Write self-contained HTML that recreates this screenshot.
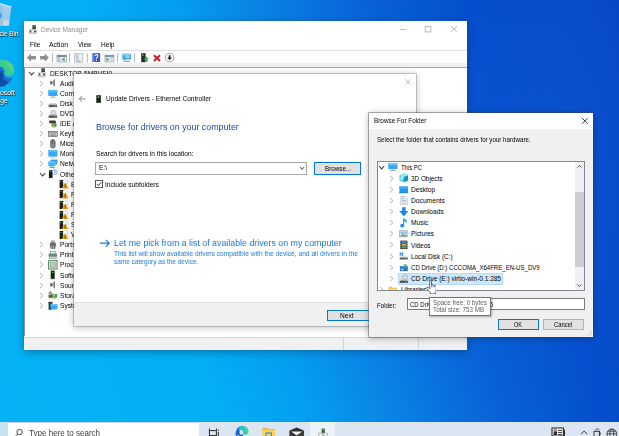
<!DOCTYPE html>
<html><head><meta charset="utf-8"><title>Device Manager</title>
<style>
*{box-sizing:border-box;margin:0;padding:0}
html,body{width:619px;height:436px;overflow:hidden}
body{font-family:"Liberation Sans",sans-serif;font-size:7.2px;color:#000;position:relative;background:#0a66d0}
.L{position:absolute;left:0;top:0;width:619px;height:436px;overflow:hidden}
.L>*,.P>*{position:absolute}
.P{position:absolute}
.t{position:absolute;white-space:nowrap;transform-origin:0 50%}
#desk{background:
  radial-gradient(ellipse 120px 260px at 565px 150px, rgba(30,105,230,.25), rgba(30,105,230,0) 100%),
  linear-gradient(72deg,#05b3f5 0%,#03aef4 30%,#059df0 42%,#0a7fe4 54%,#0863d8 66%,#054ecd 80%,#0645c2 100%)}
#dm,#ud,#bf,#tip{filter:blur(.3px)}
</style></head><body>
<div class="L" id="desk"></div>

<div class="L" id="dicons">
 <svg style="left:0;top:0" width="14" height="28" viewBox="0 0 14 28"><defs><linearGradient id="rb" x1="0" y1="0" x2="0" y2="1"><stop offset="0" stop-color="#a9d1ee"/><stop offset=".7" stop-color="#9cc8e8"/><stop offset=".78" stop-color="#c9d3dc"/><stop offset="1" stop-color="#d4d9de"/></linearGradient></defs><polygon points="0,3.2 11.4,6.4 8.9,25.8 0,25.8" fill="url(#rb)"/><polygon points="0,3.2 3,4.1 3,25.8 0,25.8" fill="#8cc0e6" opacity=".75"/><polygon points="0,3.2 11.4,6.4 11.2,7.6 0,4.6" fill="#cfe6f6"/><rect x="0" y="13" width="1.4" height="5" fill="#3b9fe6"/></svg>
 <svg style="left:0;top:59px" width="16" height="29" viewBox="0 0 16 29"><defs><linearGradient id="eg" x1="0" y1="1" x2="1" y2="0"><stop offset="0" stop-color="#27b6c8"/><stop offset=".55" stop-color="#3fcf8a"/><stop offset="1" stop-color="#86e35c"/></linearGradient></defs><path d="M0 1.2 C8 0.2 14.4 5.4 14.2 12 C14 15.8 11 17.4 7.6 17.4 C4.6 17.4 3 15.6 4.2 13.6 C5.4 11.4 3 8 0 8Z" fill="url(#eg)"/><path d="M0 8 C2.4 8 4.6 10 4.6 12.4 C3.4 14.6 4.6 17.6 8 18.6 C10 19 11.6 18.8 12.6 18.2 C11.4 23.4 5 28 0 27.6Z" fill="#1a6fd0"/><path d="M0 12 C1.6 12 3.6 14 3.2 17 C3 20.4 5.4 22.6 8.6 23 C6 26.4 3 27.8 0 27.6Z" fill="#0d4ea6"/></svg>
<div class="t" id="t0" style="left:-15.5px;top:29.3px;font-size:7.2px;line-height:10.1px;color:#fff;transform:scaleX(0.8800);text-shadow:0 0 1.2px rgba(0,0,0,.9),.5px .7px 1px rgba(0,0,0,.85),0 0 .3px #fff;">Recycle Bin</div>
<div class="t" id="t1" style="left:-12.9px;top:87.7px;font-size:7.2px;line-height:10.1px;color:#fff;transform:scaleX(0.9550);text-shadow:0 0 1.2px rgba(0,0,0,.9),.5px .7px 1px rgba(0,0,0,.85),0 0 .3px #fff;">Microsoft</div>
<div class="t" id="t2" style="left:-7.9px;top:96.0px;font-size:7.2px;line-height:10.1px;color:#fff;transform:scaleX(0.9400);text-shadow:0 0 1.2px rgba(0,0,0,.9),.5px .7px 1px rgba(0,0,0,.85),0 0 .3px #fff;">Edge</div>
</div>

<!-- Device Manager window -->
<div class="L" id="dm">
 <div style="left:24.3px;top:21.3px;width:442.8px;height:328.6px;background:#fff;box-shadow:0 0 0 .5px rgba(40,100,160,.4),0 2px 8px rgba(0,0,0,.3)"></div>
 <div style="left:24.3px;top:50.1px;width:442.8px;height:.8px;background:#dedede"></div>
 <div style="left:24.3px;top:62.8px;width:442.8px;height:4.4px;background:#f0f0f0"></div>
 <div style="left:24.3px;top:67.1px;width:442.8px;height:1.4px;background:#a6a6a6"></div>
 <div style="left:24.3px;top:336.6px;width:442.8px;height:13.3px;background:#f0f0f0;border-top:.6px solid #dcdcdc"></div>
 <div style="left:343.4px;top:338px;width:.7px;height:12px;background:#d4d4d4"></div>
 <div style="left:417.6px;top:338px;width:.7px;height:12px;background:#d4d4d4"></div>
<div style="left:24.3px;top:68px;width:1.2px;height:268.2px;background:#909090"></div>
<svg style="left:37.2px;top:68.2px" width="9.7" height="9.7" viewBox="0 0 16 16"><rect x="7.3" y="0.5" width="5.6" height="6.6" fill="#2a2f2a"/><rect x="8.8" y="1.6" width="2.6" height="3.6" fill="#2e8a3a"/><rect x="1.3" y="6.9" width="13.1" height="8.3" fill="#c6c6c6"/><rect x="3.1" y="9.6" width="2.7" height="2.2" fill="#3a3a3a"/><rect x="9.9" y="9.6" width="3" height="2.2" fill="#3a3a3a"/><rect x="5.8" y="9.2" width="4.1" height="3" fill="#fff"/></svg>
<svg style="left:27.7px;top:71.2px" width="7.2" height="4.9" viewBox="-1 -1 7.2 4.9"><path d="M0 0 L2.6 2.9 L5.2 0" fill="none" stroke="#3c3c3c" stroke-width="1.05"/></svg>
<svg style="left:48.0px;top:78.3px" width="9.7" height="9.7" viewBox="0 0 16 16"><polygon points="4,5.5 7.5,5.5 11.5,1.5 11.5,14.5 7.5,10.5 4,10.5" fill="#a2a2a2"/><rect x="4" y="5.2" width="1.8" height="5.6" fill="#4a4a4a"/><polygon points="9.4,3.6 11.5,1.5 11.5,14.5 9.4,12.4" fill="#7e7e7e"/></svg>
<svg style="left:39.4px;top:79.6px" width="4.9" height="7.2" viewBox="-1 -1 4.9 7.2"><path d="M0 0 L2.9 2.6 L0 5.2" fill="none" stroke="#a9a9a9" stroke-width=".95"/></svg>
<svg style="left:48.0px;top:88.5px" width="9.7" height="9.7" viewBox="0 0 16 16"><rect x="0.5" y="1.5" width="15" height="10" fill="#35a8f5"/><rect x="0.5" y="1.5" width="15" height="3" fill="#5cc0fa"/><rect x="6" y="11.5" width="4" height="2" fill="#a8c8dc"/><rect x="3" y="13.5" width="10" height="1" fill="#9aa"/></svg>
<svg style="left:39.4px;top:89.7px" width="4.9" height="7.2" viewBox="-1 -1 4.9 7.2"><path d="M0 0 L2.9 2.6 L0 5.2" fill="none" stroke="#a9a9a9" stroke-width=".95"/></svg>
<svg style="left:48.0px;top:98.5px" width="9.7" height="9.7" viewBox="0 0 16 16"><polygon points="2.5,7 13.5,7 15,9.5 1,9.5" fill="#c2c2c2"/><rect x="1" y="9.5" width="14" height="4" fill="#5a5a5a"/><rect x="10.5" y="10.8" width="3" height="1.4" fill="#46d246"/></svg>
<svg style="left:39.4px;top:99.8px" width="4.9" height="7.2" viewBox="-1 -1 4.9 7.2"><path d="M0 0 L2.9 2.6 L0 5.2" fill="none" stroke="#a9a9a9" stroke-width=".95"/></svg>
<svg style="left:48.0px;top:108.7px" width="9.7" height="9.7" viewBox="0 0 16 16"><circle cx="9" cy="6" r="5.2" fill="#cfcfcf"/><circle cx="9" cy="6" r="1.3" fill="#f4f4f4"/><polygon points="2.5,9 13.5,9 15,11 1,11" fill="#aaa"/><rect x="1" y="11" width="14" height="3.5" fill="#4a4a4a"/><rect x="10.5" y="12" width="3" height="1.3" fill="#46d246"/></svg>
<svg style="left:39.4px;top:109.9px" width="4.9" height="7.2" viewBox="-1 -1 4.9 7.2"><path d="M0 0 L2.9 2.6 L0 5.2" fill="none" stroke="#a9a9a9" stroke-width=".95"/></svg>
<svg style="left:48.0px;top:118.8px" width="9.7" height="9.7" viewBox="0 0 16 16"><rect x="2" y="3" width="11" height="4" fill="#3a3a3a"/><rect x="3" y="2" width="9" height="1.2" fill="#888"/><rect x="6" y="7" width="8" height="5.5" fill="#2f8f3f"/><rect x="8" y="8.5" width="3" height="2.5" fill="#9ad09a"/><rect x="7" y="12.5" width="6" height="1.5" fill="#e0a020"/></svg>
<svg style="left:39.4px;top:120.0px" width="4.9" height="7.2" viewBox="-1 -1 4.9 7.2"><path d="M0 0 L2.9 2.6 L0 5.2" fill="none" stroke="#a9a9a9" stroke-width=".95"/></svg>
<svg style="left:48.0px;top:128.8px" width="9.7" height="9.7" viewBox="0 0 16 16"><rect x="0.7" y="4" width="14.6" height="8.5" fill="#c9c9c9" stroke="#5c5c5c" stroke-width="1"/><rect x="2" y="5.5" width="12" height="1.2" fill="#888"/><rect x="2" y="7.7" width="12" height="1.2" fill="#888"/><rect x="4" y="10" width="8" height="1.2" fill="#777"/></svg>
<svg style="left:39.4px;top:130.1px" width="4.9" height="7.2" viewBox="-1 -1 4.9 7.2"><path d="M0 0 L2.9 2.6 L0 5.2" fill="none" stroke="#a9a9a9" stroke-width=".95"/></svg>
<svg style="left:48.0px;top:139.0px" width="9.7" height="9.7" viewBox="0 0 16 16"><rect x="4.2" y="1" width="7.6" height="14" rx="3.6" fill="#8a8a8a" stroke="#444" stroke-width="1"/><rect x="7.5" y="1.5" width="1" height="5" fill="#444"/><rect x="5" y="6.5" width="6" height="0.8" fill="#555"/></svg>
<svg style="left:39.4px;top:140.2px" width="4.9" height="7.2" viewBox="-1 -1 4.9 7.2"><path d="M0 0 L2.9 2.6 L0 5.2" fill="none" stroke="#a9a9a9" stroke-width=".95"/></svg>
<svg style="left:48.0px;top:149.0px" width="9.7" height="9.7" viewBox="0 0 16 16"><rect x="0.5" y="2" width="15" height="10.5" fill="#35a8f5"/><rect x="0.5" y="2" width="15" height="3" fill="#55bbf8"/><rect x="6" y="12.5" width="4" height="1.5" fill="#a8c8dc"/><rect x="4" y="14" width="8" height="1" fill="#9aa"/></svg>
<svg style="left:39.4px;top:150.3px" width="4.9" height="7.2" viewBox="-1 -1 4.9 7.2"><path d="M0 0 L2.9 2.6 L0 5.2" fill="none" stroke="#a9a9a9" stroke-width=".95"/></svg>
<svg style="left:48.0px;top:159.2px" width="9.7" height="9.7" viewBox="0 0 16 16"><rect x="4" y="1" width="11.5" height="8" fill="#2f9be8"/><rect x="0.5" y="4" width="11.5" height="8" fill="#45b0f7"/><rect x="0.5" y="4" width="11.5" height="2.4" fill="#6cc6fb"/><rect x="5" y="12" width="3" height="1.5" fill="#6a6"/><rect x="2.5" y="13.5" width="9" height="1.5" fill="#3cb54a"/></svg>
<svg style="left:39.4px;top:160.4px" width="4.9" height="7.2" viewBox="-1 -1 4.9 7.2"><path d="M0 0 L2.9 2.6 L0 5.2" fill="none" stroke="#a9a9a9" stroke-width=".95"/></svg>
<svg style="left:48.0px;top:169.2px" width="9.7" height="9.7" viewBox="0 0 16 16"><rect x="1.5" y="2" width="6" height="13" fill="#1c1c1c"/><rect x="2.5" y="3.5" width="2" height="1.5" fill="#46d246"/><circle cx="11" cy="5" r="4" fill="#fff" stroke="#3a7bd5" stroke-width="1"/><path d="M9.8 4 Q11 2.2 12.2 4 Q12.3 5 11 5.6 V6.4" stroke="#1f5fc4" stroke-width="1.1" fill="none"/><rect x="10.5" y="7" width="1" height="1" fill="#1f5fc4"/></svg>
<svg style="left:38.6px;top:172.2px" width="7.2" height="4.9" viewBox="-1 -1 7.2 4.9"><path d="M0 0 L2.6 2.9 L5.2 0" fill="none" stroke="#3c3c3c" stroke-width="1.05"/></svg>
<svg style="left:59.0px;top:179.3px" width="9.7" height="9.7" viewBox="0 0 16 16"><rect x="1" y="1.5" width="6" height="13.5" fill="#1c1c1c"/><rect x="2" y="3" width="2" height="1.6" fill="#46d246"/><circle cx="10.5" cy="5" r="4" fill="#fff" stroke="#9ab" stroke-width=".8"/><polygon points="10.2,5 16,15.6 4.4,15.6" fill="#e6a21a"/><rect x="9.4" y="9" width="1.3" height="3.4" fill="#4a3000"/><rect x="9.4" y="13" width="1.3" height="1.3" fill="#4a3000"/></svg>
<svg style="left:59.0px;top:189.4px" width="9.7" height="9.7" viewBox="0 0 16 16"><rect x="1" y="1.5" width="6" height="13.5" fill="#1c1c1c"/><rect x="2" y="3" width="2" height="1.6" fill="#46d246"/><circle cx="10.5" cy="5" r="4" fill="#fff" stroke="#9ab" stroke-width=".8"/><polygon points="10.2,5 16,15.6 4.4,15.6" fill="#e6a21a"/><rect x="9.4" y="9" width="1.3" height="3.4" fill="#4a3000"/><rect x="9.4" y="13" width="1.3" height="1.3" fill="#4a3000"/></svg>
<svg style="left:59.0px;top:199.5px" width="9.7" height="9.7" viewBox="0 0 16 16"><rect x="1" y="1.5" width="6" height="13.5" fill="#1c1c1c"/><rect x="2" y="3" width="2" height="1.6" fill="#46d246"/><circle cx="10.5" cy="5" r="4" fill="#fff" stroke="#9ab" stroke-width=".8"/><polygon points="10.2,5 16,15.6 4.4,15.6" fill="#e6a21a"/><rect x="9.4" y="9" width="1.3" height="3.4" fill="#4a3000"/><rect x="9.4" y="13" width="1.3" height="1.3" fill="#4a3000"/></svg>
<svg style="left:59.0px;top:209.7px" width="9.7" height="9.7" viewBox="0 0 16 16"><rect x="1" y="1.5" width="6" height="13.5" fill="#1c1c1c"/><rect x="2" y="3" width="2" height="1.6" fill="#46d246"/><circle cx="10.5" cy="5" r="4" fill="#fff" stroke="#9ab" stroke-width=".8"/><polygon points="10.2,5 16,15.6 4.4,15.6" fill="#e6a21a"/><rect x="9.4" y="9" width="1.3" height="3.4" fill="#4a3000"/><rect x="9.4" y="13" width="1.3" height="1.3" fill="#4a3000"/></svg>
<svg style="left:59.0px;top:219.8px" width="9.7" height="9.7" viewBox="0 0 16 16"><rect x="1" y="1.5" width="6" height="13.5" fill="#1c1c1c"/><rect x="2" y="3" width="2" height="1.6" fill="#46d246"/><circle cx="10.5" cy="5" r="4" fill="#fff" stroke="#9ab" stroke-width=".8"/><polygon points="10.2,5 16,15.6 4.4,15.6" fill="#e6a21a"/><rect x="9.4" y="9" width="1.3" height="3.4" fill="#4a3000"/><rect x="9.4" y="13" width="1.3" height="1.3" fill="#4a3000"/></svg>
<svg style="left:59.0px;top:229.8px" width="9.7" height="9.7" viewBox="0 0 16 16"><rect x="1" y="1.5" width="6" height="13.5" fill="#1c1c1c"/><rect x="2" y="3" width="2" height="1.6" fill="#46d246"/><circle cx="10.5" cy="5" r="4" fill="#fff" stroke="#9ab" stroke-width=".8"/><polygon points="10.2,5 16,15.6 4.4,15.6" fill="#e6a21a"/><rect x="9.4" y="9" width="1.3" height="3.4" fill="#4a3000"/><rect x="9.4" y="13" width="1.3" height="1.3" fill="#4a3000"/></svg>
<svg style="left:48.0px;top:239.9px" width="9.7" height="9.7" viewBox="0 0 16 16"><rect x="5" y="1" width="6" height="4" fill="#9a9a9a"/><rect x="3" y="4.5" width="10" height="6.5" fill="#6e6e6e"/><rect x="4" y="11" width="2" height="3.5" fill="#555"/><rect x="7" y="11" width="2" height="4" fill="#555"/><rect x="10" y="11" width="2" height="3.5" fill="#555"/></svg>
<svg style="left:39.4px;top:241.2px" width="4.9" height="7.2" viewBox="-1 -1 4.9 7.2"><path d="M0 0 L2.9 2.6 L0 5.2" fill="none" stroke="#a9a9a9" stroke-width=".95"/></svg>
<svg style="left:48.0px;top:250.0px" width="9.7" height="9.7" viewBox="0 0 16 16"><rect x="4" y="2" width="8" height="4" fill="#fff" stroke="#666" stroke-width=".9"/><rect x="1" y="6" width="14" height="5" fill="#7c7c7c"/><rect x="5" y="7" width="3" height="1.4" fill="#35c0f0"/><rect x="8.5" y="7" width="2.5" height="1.4" fill="#46d246"/><polygon points="3,11 13,11 14.5,14 1.5,14" fill="#e6e6e6" stroke="#666" stroke-width=".8"/></svg>
<svg style="left:39.4px;top:251.3px" width="4.9" height="7.2" viewBox="-1 -1 4.9 7.2"><path d="M0 0 L2.9 2.6 L0 5.2" fill="none" stroke="#a9a9a9" stroke-width=".95"/></svg>
<svg style="left:48.0px;top:260.1px" width="9.7" height="9.7" viewBox="0 0 16 16"><rect x="1" y="1" width="14" height="14" fill="#e9e6d2" stroke="#39784a" stroke-width="1.4"/><rect x="4" y="4" width="8" height="8" fill="#c4c4c4" stroke="#7aa08a" stroke-width="1"/></svg>
<svg style="left:39.4px;top:261.4px" width="4.9" height="7.2" viewBox="-1 -1 4.9 7.2"><path d="M0 0 L2.9 2.6 L0 5.2" fill="none" stroke="#a9a9a9" stroke-width=".95"/></svg>
<svg style="left:48.0px;top:270.2px" width="9.7" height="9.7" viewBox="0 0 16 16"><rect x="4.5" y="1" width="6.5" height="14" fill="#1d1d1d"/><rect x="6.5" y="3" width="2.5" height="2" fill="#46d246"/><rect x="4.5" y="13.5" width="6.5" height="1.5" fill="#555"/></svg>
<svg style="left:39.4px;top:271.5px" width="4.9" height="7.2" viewBox="-1 -1 4.9 7.2"><path d="M0 0 L2.9 2.6 L0 5.2" fill="none" stroke="#a9a9a9" stroke-width=".95"/></svg>
<svg style="left:48.0px;top:280.3px" width="9.7" height="9.7" viewBox="0 0 16 16"><polygon points="4,5.5 7.5,5.5 11.5,1.5 11.5,14.5 7.5,10.5 4,10.5" fill="#a2a2a2"/><rect x="4" y="5.2" width="1.8" height="5.6" fill="#4a4a4a"/><polygon points="9.4,3.6 11.5,1.5 11.5,14.5 9.4,12.4" fill="#7e7e7e"/></svg>
<svg style="left:39.4px;top:281.6px" width="4.9" height="7.2" viewBox="-1 -1 4.9 7.2"><path d="M0 0 L2.9 2.6 L0 5.2" fill="none" stroke="#a9a9a9" stroke-width=".95"/></svg>
<svg style="left:48.0px;top:290.4px" width="9.7" height="9.7" viewBox="0 0 16 16"><path d="M2 8 L2 4 L4 2 L6 4 L6 8" fill="#e8e8e8" stroke="#444" stroke-width="1"/><circle cx="4" cy="5" r="1" fill="#444"/><rect x="5" y="7" width="10" height="5.5" fill="#2f8f3f"/><rect x="8" y="8" width="4" height="3" fill="#9ad09a"/><rect x="6" y="12.5" width="7" height="1.8" fill="#e0a020"/><rect x="1" y="8" width="5" height="5" fill="#555"/></svg>
<svg style="left:39.4px;top:291.7px" width="4.9" height="7.2" viewBox="-1 -1 4.9 7.2"><path d="M0 0 L2.9 2.6 L0 5.2" fill="none" stroke="#a9a9a9" stroke-width=".95"/></svg>
<svg style="left:48.0px;top:300.5px" width="9.7" height="9.7" viewBox="0 0 16 16"><rect x="1" y="1.5" width="5" height="13" fill="#2d2d2d"/><rect x="1" y="1.5" width="7" height="2.5" fill="#444"/><rect x="4" y="5.5" width="11.5" height="8" fill="#35a8f5"/><rect x="4" y="5.5" width="11.5" height="2.4" fill="#5cc0fa"/><rect x="7" y="13.5" width="5" height="1.2" fill="#9ab"/></svg>
<svg style="left:39.4px;top:301.8px" width="4.9" height="7.2" viewBox="-1 -1 4.9 7.2"><path d="M0 0 L2.9 2.6 L0 5.2" fill="none" stroke="#a9a9a9" stroke-width=".95"/></svg>
<svg style="left:28.2px;top:24.6px" width="9.7" height="9.7" viewBox="0 0 16 16"><rect x="7.3" y="0.5" width="5.6" height="6.6" fill="#2a2f2a"/><rect x="8.8" y="1.6" width="2.6" height="3.6" fill="#2e8a3a"/><rect x="1.3" y="6.9" width="13.1" height="8.3" fill="#c6c6c6"/><rect x="3.1" y="9.6" width="2.7" height="2.2" fill="#3a3a3a"/><rect x="9.9" y="9.6" width="3" height="2.2" fill="#3a3a3a"/><rect x="5.8" y="9.2" width="4.1" height="3" fill="#fff"/></svg>
<svg style="left:399.0px;top:25.0px" width="60.0" height="9.0" viewBox="0 0 60.0 9.0"><path d="M1.1 4.6 H6.9" stroke="#b0b0b0" stroke-width=".85"/><rect x="26.3" y="1.3" width="5.6" height="5.6" fill="none" stroke="#b0b0b0" stroke-width=".85"/><path d="M52 1.1 L57.9 7 M57.9 1.1 L52 7" stroke="#b0b0b0" stroke-width=".85"/></svg>
<svg style="left:24.0px;top:50.0px" width="160.0" height="14.0" viewBox="0 0 160.0 14.0"><polygon points="2.8000000000000007,7.7 7,3.6 7,6 12,6 12,9.4 7,9.4 7,11.8" fill="#8f8f8f"/><polygon points="24.9,7.7 20.700000000000003,3.6 20.700000000000003,6 16.1,6 16.1,9.4 20.700000000000003,9.4 20.700000000000003,11.8" fill="#8f8f8f"/><rect x="28.0" y="3.2" width=".8" height="9.3" fill="#a5a5a5"/><rect x="45.1" y="3.2" width=".8" height="9.3" fill="#a5a5a5"/><rect x="62.9" y="3.2" width=".8" height="9.3" fill="#a5a5a5"/><rect x="93.0" y="3.2" width=".8" height="9.3" fill="#a5a5a5"/><rect x="110.2" y="3.2" width=".8" height="9.3" fill="#a5a5a5"/><rect x="33" y="5.1" width="9.4" height="6.9" fill="#dfe6ee" stroke="#8a96a8" stroke-width=".6"/><rect x="33" y="5.1" width="9.4" height="1.8" fill="#6f83a6"/><rect x="33.6" y="7.2" width="2.6" height="4.6" fill="#b7c4d6"/><polygon points="40.599999999999994,7.6 40.599999999999994,11.2 37.6,9.4" fill="#3cb54a"/><rect x="50.3" y="3.3" width="8.6" height="9" fill="#dfe3e8" stroke="#b0b4ba" stroke-width=".6"/><rect x="52" y="4.6" width="2.4" height="6" fill="#c3cad2"/><rect x="55.2" y="4.6" width="2.4" height="6" fill="#eef1f4"/><rect x="53.5" y="10.4" width="2.4" height="1.5" fill="#7fc4e8"/><rect x="68.5" y="3.2" width="7.6" height="8.8" fill="#2a54c8"/><rect x="68.5" y="3.2" width="2" height="8.8" fill="#5b82e4"/><path d="M70.8 5.8 Q72.4 3.6 74 5.6 Q74.2 6.8 72.4 8 V9" stroke="#fff" stroke-width="1.1" fill="none"/><rect x="71.8" y="9.8" width="1.2" height="1.2" fill="#fff"/><rect x="80.9" y="5.1" width="9.1" height="6.9" fill="#dfe6ee" stroke="#8a96a8" stroke-width=".6"/><rect x="80.9" y="5.1" width="9.1" height="1.8" fill="#7f8ea8"/><rect x="86.6" y="7.2" width="3" height="4.6" fill="#c9d3e0"/><polygon points="82.4,7.6 82.4,11.2 85.2,9.4" fill="#3cb54a"/><rect x="98.2" y="3.8" width="9" height="5.8" fill="#49b0ee"/><rect x="98.2" y="3.8" width="9" height="1.6" fill="#7accf6"/><circle cx="103.6" cy="6.4" r="2" fill="#9fd8f8" stroke="#6aa" stroke-width=".5"/><path d="M102.2 8 L100.2 10.4" stroke="#667" stroke-width=".8"/><rect x="99.5" y="10.8" width="6.6" height="1" fill="#7a8a9a"/><rect x="117.19999999999999" y="3.2" width="4.4" height="9" fill="#2b2b2b"/><rect x="118.19999999999999" y="4.4" width="1.6" height="1.4" fill="#46d246"/><polygon points="122.4,6.6 125,9.4 123.5,9.4 123.5,12 121.30000000000001,12 121.30000000000001,9.4 119.80000000000001,9.4" fill="#2fb344"/><path d="M129.9 5.2 L136 11 M136 5.2 L129.9 11" stroke="#d8121e" stroke-width="1.9"/><circle cx="145.6" cy="7.6" r="4.3" fill="#fff" stroke="#7a7a7a" stroke-width=".7"/><polygon points="144.7,5.2 146.5,5.2 146.5,7.4 148,7.4 145.6,10.2 143.2,7.4 144.7,7.4" fill="#222"/></svg>
<div class="t" id="t3" style="left:40.7px;top:25.4px;font-size:7.2px;line-height:10.1px;color:#8c8c8c;transform:scaleX(0.9017);">Device Manager</div>
<div class="t" id="t4" style="left:30.0px;top:39.9px;font-size:7.2px;line-height:10.1px;transform:scaleX(0.8798);">File</div>
<div class="t" id="t5" style="left:49.1px;top:39.9px;font-size:7.2px;line-height:10.1px;transform:scaleX(0.9507);">Action</div>
<div class="t" id="t6" style="left:77.8px;top:39.9px;font-size:7.2px;line-height:10.1px;transform:scaleX(0.8607);">View</div>
<div class="t" id="t7" style="left:100.5px;top:39.9px;font-size:7.2px;line-height:10.1px;transform:scaleX(0.9124);">Help</div>
<div class="t" id="t8" style="left:49.5px;top:68.5px;font-size:7.2px;line-height:10.1px;transform:scaleX(0.9300);">DESKTOP-5MBVEI0</div>
<div class="t" id="t9" style="left:60.2px;top:78.6px;font-size:7.2px;line-height:10.1px;transform:scaleX(0.9200);">Audio inputs and outputs</div>
<div class="t" id="t10" style="left:60.2px;top:88.8px;font-size:7.2px;line-height:10.1px;transform:scaleX(0.9200);">Computer</div>
<div class="t" id="t11" style="left:60.2px;top:98.8px;font-size:7.2px;line-height:10.1px;transform:scaleX(0.9200);">Disk drives</div>
<div class="t" id="t12" style="left:60.2px;top:109.0px;font-size:7.2px;line-height:10.1px;transform:scaleX(0.9200);">DVD/CD-ROM drives</div>
<div class="t" id="t13" style="left:60.2px;top:119.0px;font-size:7.2px;line-height:10.1px;transform:scaleX(0.9200);">IDE ATA/ATAPI controllers</div>
<div class="t" id="t14" style="left:60.2px;top:129.1px;font-size:7.2px;line-height:10.1px;transform:scaleX(0.9200);">Keyboards</div>
<div class="t" id="t15" style="left:60.2px;top:139.2px;font-size:7.2px;line-height:10.1px;transform:scaleX(0.9200);">Mice and other pointing devices</div>
<div class="t" id="t16" style="left:60.2px;top:149.3px;font-size:7.2px;line-height:10.1px;transform:scaleX(0.9200);">Monitors</div>
<div class="t" id="t17" style="left:60.2px;top:159.4px;font-size:7.2px;line-height:10.1px;transform:scaleX(0.9200);">Network adapters</div>
<div class="t" id="t18" style="left:60.2px;top:169.5px;font-size:7.2px;line-height:10.1px;transform:scaleX(0.9200);">Other devices</div>
<div class="t" id="t19" style="left:71.0px;top:179.6px;font-size:7.2px;line-height:10.1px;transform:scaleX(0.9200);">Ethernet Controller</div>
<div class="t" id="t20" style="left:71.0px;top:189.7px;font-size:7.2px;line-height:10.1px;transform:scaleX(0.9200);">PCI Device</div>
<div class="t" id="t21" style="left:71.0px;top:199.8px;font-size:7.2px;line-height:10.1px;transform:scaleX(0.9200);">PCI Device</div>
<div class="t" id="t22" style="left:71.0px;top:209.9px;font-size:7.2px;line-height:10.1px;transform:scaleX(0.9200);">PCI Simple Communications Controller</div>
<div class="t" id="t23" style="left:71.0px;top:220.0px;font-size:7.2px;line-height:10.1px;transform:scaleX(0.9200);">SCSI Controller</div>
<div class="t" id="t24" style="left:71.0px;top:230.1px;font-size:7.2px;line-height:10.1px;transform:scaleX(0.9200);">Video Controller (VGA Compatible)</div>
<div class="t" id="t25" style="left:60.2px;top:240.2px;font-size:7.2px;line-height:10.1px;transform:scaleX(0.9200);">Ports (COM &amp; LPT)</div>
<div class="t" id="t26" style="left:60.2px;top:250.3px;font-size:7.2px;line-height:10.1px;transform:scaleX(0.9200);">Print queues</div>
<div class="t" id="t27" style="left:60.2px;top:260.4px;font-size:7.2px;line-height:10.1px;transform:scaleX(0.9200);">Processors</div>
<div class="t" id="t28" style="left:60.2px;top:270.6px;font-size:7.2px;line-height:10.1px;transform:scaleX(0.9200);">Software devices</div>
<div class="t" id="t29" style="left:60.2px;top:280.6px;font-size:7.2px;line-height:10.1px;transform:scaleX(0.9200);">Sound, video and game controllers</div>
<div class="t" id="t30" style="left:60.2px;top:290.7px;font-size:7.2px;line-height:10.1px;transform:scaleX(0.9200);">Storage controllers</div>
<div class="t" id="t31" style="left:60.2px;top:300.8px;font-size:7.2px;line-height:10.1px;transform:scaleX(0.9200);">System devices</div>
</div>

<!-- Update Drivers dialog -->
<div class="L" id="ud">
 <div style="left:73.5px;top:74px;width:342.5px;height:252px;background:#fff;box-shadow:0 0 0 .6px rgba(110,110,110,.55),0 1px 7px rgba(0,0,0,.3)"></div>
 <div style="left:73.5px;top:302.4px;width:342.5px;height:23.6px;background:#f0f0f0;border-top:.5px solid #dfdfdf"></div>
 <div style="left:95px;top:161.5px;width:211.8px;height:13px;border:.8px solid #a8a8a8;background:#fff"></div>
 <div style="left:313.5px;top:162.2px;width:47.9px;height:13.3px;border:1.3px solid #0078d7;background:#e1e1e1"></div>
 <div style="left:95.1px;top:180.4px;width:7.6px;height:7.6px;border:.8px solid #5a5a5a;background:#fff"></div>
 <div style="left:326.6px;top:309.5px;width:50px;height:11.2px;border:1.1px solid #0078d7;background:#e1e1e1"></div>
<svg style="left:77.5px;top:94.5px" width="9.0" height="8.0" viewBox="0 0 9.0 8.0"><path d="M1.2 3.9 H7.4 M4 1.1 L1.2 3.9 L4 6.7" fill="none" stroke="#7a7a7a" stroke-width=".9"/></svg>
<svg style="left:96.2px;top:94.5px" width="5.2" height="8.6" viewBox="0 0 5.2 8.6"><rect x="0.3" y="0.2" width="4.6" height="8" fill="#1d1d1d"/><rect x="1.6" y="1.2" width="1.8" height="1.6" fill="#46d246"/><rect x="0.3" y="7.2" width="4.6" height="1" fill="#555"/></svg>
<svg style="left:404.0px;top:78.0px" width="8.0" height="8.0" viewBox="0 0 8.0 8.0"><path d="M1.2 1.2 L6.6 6.6 M6.6 1.2 L1.2 6.6" stroke="#ababab" stroke-width=".85"/></svg>
<svg style="left:298.8px;top:166.1px" width="6.2" height="4.3" viewBox="-1 -1 6.2 4.3"><path d="M0 0 L2.1 2.3 L4.2 0" fill="none" stroke="#6a6a6a" stroke-width="1.05"/></svg>
<svg style="left:95.0px;top:180.4px" width="8.0" height="8.0" viewBox="0 0 8.0 8.0"><path d="M1.7 3.9 L3.4 5.6 L6.3 2.2" fill="none" stroke="#222" stroke-width=".9"/></svg>
<svg style="left:99.0px;top:239.2px" width="11.5" height="8.4" viewBox="0 0 11.5 8.4"><path d="M0.9 4.2 H10.2 M6.9 0.9 L10.2 4.2 L6.9 7.5" fill="none" stroke="#1a7ada" stroke-width="1.15"/></svg>
<div class="t" id="t32" style="left:106.0px;top:94.0px;font-size:7.2px;line-height:10.1px;transform:scaleX(0.9158);">Update Drivers - Ethernet Controller</div>
<div class="t" id="t33" style="left:95.5px;top:120.1px;font-size:9.7px;line-height:13.6px;color:#1c47a6;transform:scaleX(0.9146);">Browse for drivers on your computer</div>
<div class="t" id="t34" style="left:95.5px;top:149.4px;font-size:7.2px;line-height:10.1px;transform:scaleX(0.9175);">Search for drivers in this location:</div>
<div class="t" id="t35" style="left:98.8px;top:163.1px;font-size:7.2px;line-height:10.1px;transform:scaleX(0.9208);">E:\</div>
<div class="t" id="t36" style="left:324.7px;top:164.4px;font-size:7.2px;line-height:10.1px;transform:scaleX(0.8709);">Browse...</div>
<div class="t" id="t37" style="left:104.6px;top:179.9px;font-size:7.2px;line-height:10.1px;transform:scaleX(0.9238);">Include subfolders</div>
<div class="t" id="t38" style="left:114.2px;top:236.4px;font-size:9.7px;line-height:13.6px;color:#1a76d8;transform:scaleX(0.9110);">Let me pick from a list of available drivers on my computer</div>
<div class="t" id="t39" style="left:114.0px;top:248.6px;font-size:7.2px;line-height:10.1px;color:#1f7ada;transform:scaleX(0.9254);">This list will show available drivers compatible with the device, and all drivers in the</div>
<div class="t" id="t40" style="left:114.0px;top:257.1px;font-size:7.2px;line-height:10.1px;color:#1f7ada;transform:scaleX(0.9016);">same category as the device.</div>
<div class="t" id="t41" style="left:339.5px;top:310.8px;font-size:7.2px;line-height:10.1px;transform:scaleX(0.9133);">Next</div>
</div>

<!-- Browse For Folder dialog -->
<div class="L" id="bf">
 <div style="left:368.9px;top:113px;width:224.4px;height:223.8px;background:#f0f0f0;box-shadow:0 0 0 .6px rgba(70,70,70,.7),0 1px 7px rgba(0,0,0,.32)"></div>
 <div style="left:368.9px;top:113px;width:224.4px;height:15.6px;background:#fff"></div>
 <div style="left:377.2px;top:161.2px;width:207.5px;height:129.6px;background:#fff;border:.7px solid #828790"></div>
 <div class="P" style="left:378px;top:162px;width:197.4px;height:128.1px;overflow:hidden"><div class="P" style="left:-378px;top:-162px;width:619px;height:436px">
  <div style="left:397.6px;top:273.2px;width:105.2px;height:11.4px;background:#cce8ff;border:.5px solid #b4dbff"></div>
<svg style="left:378.0px;top:165.2px" width="7.2" height="4.9" viewBox="-1 -1 7.2 4.9"><path d="M0 0 L2.6 2.9 L5.2 0" fill="none" stroke="#3c3c3c" stroke-width="1.05"/></svg>
<svg style="left:388.0px;top:162.2px" width="9.7" height="9.7" viewBox="0 0 16 16"><rect x="0.4" y="1.6" width="15.2" height="10" fill="#3aa9f3"/><rect x="0.4" y="1.6" width="15.2" height="3.4" fill="#6cc8fb"/><rect x="6.3" y="11.6" width="3.4" height="1.8" fill="#a8c8dc"/><rect x="2.6" y="13.3" width="10.8" height="1.3" fill="#8a9aa8"/></svg>
<svg style="left:389.4px;top:174.5px" width="5.0" height="7.3" viewBox="-1 -1 5.0 7.3"><path d="M0 0 L3.0 2.6 L0 5.3" fill="none" stroke="#a9a9a9" stroke-width=".95"/></svg>
<svg style="left:398.7px;top:173.3px" width="9.7" height="9.7" viewBox="0 0 16 16"><polygon points="8,0.8 15.2,3.6 15.2,12.4 8,15.2 0.8,12.4 0.8,3.6" fill="#3fd0ea"/><polygon points="8,6.4 15.2,3.6 15.2,12.4 8,15.2" fill="#1592c4"/><polygon points="8,0.8 15.2,3.6 8,6.4 0.8,3.6" fill="#8fe8f6"/><rect x="2.6" y="6" width="4.4" height="5" fill="#dffaff" opacity=".8"/></svg>
<svg style="left:389.4px;top:185.7px" width="5.0" height="7.3" viewBox="-1 -1 5.0 7.3"><path d="M0 0 L3.0 2.6 L0 5.3" fill="none" stroke="#a9a9a9" stroke-width=".95"/></svg>
<svg style="left:398.7px;top:184.5px" width="9.7" height="9.7" viewBox="0 0 16 16"><rect x="0.6" y="2.4" width="14.8" height="11" fill="#2297f2"/><rect x="0.6" y="2.4" width="14.8" height="3.4" fill="#44abf8"/><rect x="0.6" y="12.4" width="14.8" height="1" fill="#1a7ad2"/></svg>
<svg style="left:389.4px;top:196.8px" width="5.0" height="7.3" viewBox="-1 -1 5.0 7.3"><path d="M0 0 L3.0 2.6 L0 5.3" fill="none" stroke="#a9a9a9" stroke-width=".95"/></svg>
<svg style="left:398.7px;top:195.6px" width="9.7" height="9.7" viewBox="0 0 16 16"><path d="M3 1 H10.5 L13.5 4 V15 H3Z" fill="#fbfbfb" stroke="#8a8f98" stroke-width=".9"/><rect x="5" y="4" width="4" height="1.1" fill="#3c8ee0"/><rect x="5" y="6.5" width="6.5" height="1.1" fill="#6aa8e8"/><rect x="5" y="9" width="6.5" height="1.1" fill="#6aa8e8"/><rect x="5" y="11.5" width="6.5" height="1.1" fill="#8ab8ea"/></svg>
<svg style="left:389.4px;top:208.0px" width="5.0" height="7.3" viewBox="-1 -1 5.0 7.3"><path d="M0 0 L3.0 2.6 L0 5.3" fill="none" stroke="#a9a9a9" stroke-width=".95"/></svg>
<svg style="left:398.7px;top:206.8px" width="9.7" height="9.7" viewBox="0 0 16 16"><polygon points="5,0.5 11,0.5 11,6.6 15.6,6.6 8,15.6 0.4,6.6 5,6.6" fill="#2088ea"/></svg>
<svg style="left:389.4px;top:219.1px" width="5.0" height="7.3" viewBox="-1 -1 5.0 7.3"><path d="M0 0 L3.0 2.6 L0 5.3" fill="none" stroke="#a9a9a9" stroke-width=".95"/></svg>
<svg style="left:398.7px;top:217.9px" width="9.7" height="9.7" viewBox="0 0 16 16"><path d="M6.8 0.6 C9.4 1.2 13.8 3.2 12.8 9 C12 6.4 10 5.6 8.6 5.4 V12.6 A3.3 3 0 1 1 6.8 9.9 Z" fill="#1f93f0"/></svg>
<svg style="left:389.4px;top:230.3px" width="5.0" height="7.3" viewBox="-1 -1 5.0 7.3"><path d="M0 0 L3.0 2.6 L0 5.3" fill="none" stroke="#a9a9a9" stroke-width=".95"/></svg>
<svg style="left:398.7px;top:229.1px" width="9.7" height="9.7" viewBox="0 0 16 16"><rect x="1" y="3" width="14" height="10" fill="#e9eef3" stroke="#7c8794" stroke-width=".9"/><rect x="2.2" y="4.2" width="11.6" height="4" fill="#8ecbf4"/><polygon points="2.2,11.8 6,7.5 9,10 11,8.5 13.8,11.8" fill="#86a892"/><rect x="2.2" y="10.6" width="11.6" height="1.3" fill="#6f957c"/></svg>
<svg style="left:389.4px;top:241.4px" width="5.0" height="7.3" viewBox="-1 -1 5.0 7.3"><path d="M0 0 L3.0 2.6 L0 5.3" fill="none" stroke="#a9a9a9" stroke-width=".95"/></svg>
<svg style="left:398.7px;top:240.2px" width="9.7" height="9.7" viewBox="0 0 16 16"><rect x="2" y="1" width="12" height="14" fill="#3a3a3a"/><rect x="4.6" y="2.2" width="6.8" height="3.4" fill="#2f8fe6"/><rect x="4.6" y="6.3" width="6.8" height="3.4" fill="#e8a030"/><rect x="4.6" y="10.4" width="6.8" height="3.4" fill="#48b058"/><g fill="#ddd"><rect x="2.6" y="2" width="1.2" height="1.4"/><rect x="2.6" y="5" width="1.2" height="1.4"/><rect x="2.6" y="8" width="1.2" height="1.4"/><rect x="2.6" y="11" width="1.2" height="1.4"/><rect x="12.2" y="2" width="1.2" height="1.4"/><rect x="12.2" y="5" width="1.2" height="1.4"/><rect x="12.2" y="8" width="1.2" height="1.4"/><rect x="12.2" y="11" width="1.2" height="1.4"/></g></svg>
<svg style="left:389.4px;top:252.6px" width="5.0" height="7.3" viewBox="-1 -1 5.0 7.3"><path d="M0 0 L3.0 2.6 L0 5.3" fill="none" stroke="#a9a9a9" stroke-width=".95"/></svg>
<svg style="left:398.7px;top:251.3px" width="9.7" height="9.7" viewBox="0 0 16 16"><g fill="#1e90ea"><rect x="1" y="2.6" width="2.6" height="2.2"/><rect x="4.1" y="2.2" width="2.8" height="2.6"/><rect x="1" y="5.3" width="2.6" height="2.2"/><rect x="4.1" y="5.3" width="2.8" height="2.6"/></g><polygon points="3,9 13,9 14.8,11 1.2,11" fill="#c4c4c4"/><rect x="1.2" y="11" width="13.6" height="3" fill="#5a5a5a"/><rect x="10.8" y="11.8" width="2.6" height="1.2" fill="#46d246"/></svg>
<svg style="left:389.4px;top:263.7px" width="5.0" height="7.3" viewBox="-1 -1 5.0 7.3"><path d="M0 0 L3.0 2.6 L0 5.3" fill="none" stroke="#a9a9a9" stroke-width=".95"/></svg>
<svg style="left:398.7px;top:262.5px" width="9.7" height="9.7" viewBox="0 0 16 16"><rect x="1.5" y="5" width="13" height="8.5" fill="#2c73c8"/><rect x="1.5" y="5" width="13" height="2.4" fill="#4a92dc"/><polygon points="6,7.5 10.5,2 13,2.5 9.5,8.5" fill="#3cb54a"/><polygon points="7,2 10.5,2 9,4.5" fill="#54c45a"/><rect x="3" y="9.5" width="5" height="2.5" fill="#9cc4ee"/></svg>
<svg style="left:389.4px;top:274.9px" width="5.0" height="7.3" viewBox="-1 -1 5.0 7.3"><path d="M0 0 L3.0 2.6 L0 5.3" fill="none" stroke="#a9a9a9" stroke-width=".95"/></svg>
<svg style="left:398.7px;top:273.6px" width="9.7" height="9.7" viewBox="0 0 16 16"><circle cx="10.2" cy="5.6" r="4.7" fill="#cfcfcf" stroke="#a4a4a4" stroke-width=".6"/><circle cx="10.2" cy="5.6" r="1.3" fill="#f6f6f6"/><polygon points="3,9.6 13,9.6 14.8,11.4 1.2,11.4" fill="#b0b0b0"/><rect x="1.2" y="11.4" width="13.6" height="3.2" fill="#4c4c4c"/><rect x="10.8" y="12.3" width="2.6" height="1.2" fill="#46d246"/></svg>
<svg style="left:379.0px;top:285.8px" width="5.2" height="7.6" viewBox="-1 -1 5.2 7.6"><path d="M0 0 L3.2 2.8 L0 5.6" fill="none" stroke="#a9a9a9" stroke-width=".95"/></svg>
<svg style="left:387.8px;top:284.8px" width="9.7" height="9.7" viewBox="0 0 16 16"><path d="M1 3 H6 L7.5 4.5 H15 V14 H1Z" fill="#f4c542"/><rect x="1" y="6" width="14" height="8" fill="#f8d66a"/></svg>
<div class="t" id="t44" style="left:400.8px;top:162.9px;font-size:7.2px;line-height:10.1px;transform:scaleX(0.8215);">This PC</div>
<div class="t" id="t45" style="left:411.0px;top:173.6px;font-size:7.2px;line-height:10.1px;transform:scaleX(0.8858);">3D Objects</div>
<div class="t" id="t46" style="left:411.0px;top:184.8px;font-size:7.2px;line-height:10.1px;transform:scaleX(0.9137);">Desktop</div>
<div class="t" id="t47" style="left:411.0px;top:195.9px;font-size:7.2px;line-height:10.1px;transform:scaleX(0.9296);">Documents</div>
<div class="t" id="t48" style="left:411.0px;top:207.0px;font-size:7.2px;line-height:10.1px;transform:scaleX(0.9195);">Downloads</div>
<div class="t" id="t49" style="left:411.0px;top:218.2px;font-size:7.2px;line-height:10.1px;transform:scaleX(0.9211);">Music</div>
<div class="t" id="t50" style="left:411.0px;top:229.3px;font-size:7.2px;line-height:10.1px;transform:scaleX(0.8857);">Pictures</div>
<div class="t" id="t51" style="left:411.0px;top:240.5px;font-size:7.2px;line-height:10.1px;transform:scaleX(0.8875);">Videos</div>
<div class="t" id="t52" style="left:411.0px;top:251.6px;font-size:7.2px;line-height:10.1px;transform:scaleX(0.8803);">Local Disk (C:)</div>
<div class="t" id="t53" style="left:411.0px;top:262.8px;font-size:7.2px;line-height:10.1px;transform:scaleX(0.8436);">CD Drive (D:) CCCOMA_X64FRE_EN-US_DV9</div>
<div class="t" id="t54" style="left:411.0px;top:273.9px;font-size:7.2px;line-height:10.1px;transform:scaleX(0.9049);">CD Drive (E:) virtio-win-0.1.285</div>
<div class="t" id="t55" style="left:400.8px;top:285.1px;font-size:7.2px;line-height:10.1px;transform:scaleX(0.9200);">Libraries</div>
 </div></div>
 <div style="left:406.6px;top:298.2px;width:178.7px;height:12.3px;border:.7px solid #7a7a7a;background:#fff"></div>
 <div style="left:497.9px;top:318.6px;width:41.1px;height:11.9px;border:1.1px solid #0078d7;background:#e1e1e1"></div>
 <div style="left:543.1px;top:318.6px;width:41px;height:11.9px;border:.7px solid #b4b4b4;background:#e1e1e1"></div>
<svg style="left:581.0px;top:116.6px" width="8.0" height="8.0" viewBox="0 0 8.0 8.0"><path d="M1 1 L6.8 6.8 M6.8 1 L1 6.8" stroke="#2a2a2a" stroke-width=".9"/></svg>
<svg style="left:586.5px;top:330.0px" width="6.0" height="6.0" viewBox="0 0 6.0 6.0"><g fill="#c4c4c4"><rect x="4" y="0.5" width="1" height="1"/><rect x="2.2" y="2.3" width="1" height="1"/><rect x="4" y="2.3" width="1" height="1"/><rect x="0.4" y="4.1" width="1" height="1"/><rect x="2.2" y="4.1" width="1" height="1"/><rect x="4" y="4.1" width="1" height="1"/></g></svg>
<div style="left:575.4px;top:162px;width:8.7px;height:128.1px;background:#f0f0f0"></div>
<div style="left:575.4px;top:191.9px;width:8.7px;height:74.9px;background:#cdcdcd"></div>
<svg style="left:576.4px;top:164.4px" width="7.0" height="5.0" viewBox="0 0 7.0 5.0"><path d="M1.3 3.6 L3.4 1.5 L5.5 3.6" fill="none" stroke="#505050" stroke-width="1"/></svg>
<svg style="left:576.4px;top:282.6px" width="7.0" height="5.0" viewBox="0 0 7.0 5.0"><path d="M1.3 1.4 L3.4 3.5 L5.5 1.4" fill="none" stroke="#505050" stroke-width="1"/></svg>
<div class="t" id="t42" style="left:373.7px;top:115.9px;font-size:7.2px;line-height:10.1px;transform:scaleX(0.8846);">Browse For Folder</div>
<div class="t" id="t43" style="left:377.0px;top:134.9px;font-size:7.2px;line-height:10.1px;transform:scaleX(0.8601);">Select the folder that contains drivers for your hardware.</div>
<div class="t" id="t56" style="left:376.7px;top:300.9px;font-size:7.2px;line-height:10.1px;transform:scaleX(0.8626);">Folder:</div>
<div class="t" id="t57" style="left:410.0px;top:299.6px;font-size:7.2px;line-height:10.1px;transform:scaleX(0.8366);">CD Drive (E:) virtio-win-0.1.285</div>
<div class="t" id="t58" style="left:513.9px;top:320.1px;font-size:7.2px;line-height:10.1px;transform:scaleX(0.7411);">OK</div>
<div class="t" id="t59" style="left:554.0px;top:319.9px;font-size:7.2px;line-height:10.1px;transform:scaleX(0.8223);">Cancel</div>
</div>

<!-- tooltip + cursor -->
<div class="L" id="tip">
 <div style="left:429.4px;top:296.7px;width:61.7px;height:18.9px;background:#fff;border:.6px solid #767676;box-shadow:1px 1px 2px rgba(0,0,0,.3)"></div>
<div class="t" id="t60" style="left:433.0px;top:297.6px;font-size:7.2px;line-height:10.1px;color:#606060;transform:scaleX(0.8686);">Space free: 0 bytes</div>
<div class="t" id="t61" style="left:433.0px;top:305.3px;font-size:7.2px;line-height:10.1px;color:#606060;transform:scaleX(0.8717);">Total size: 753 MB</div>
<svg style="left:425.6px;top:280.0px" width="10.6" height="14.2" viewBox="0 0 20 27"><path d="M7 2.2 Q7 0.5 8.75 0.5 Q10.5 0.5 10.5 2.2 V9.5 Q12 8.3 13.5 9.8 Q15 8.9 16.5 10.8 Q18.2 10.2 19.5 12.2 V19 Q19.5 22 17.5 24 V26.5 H8 V24 Q5 20 1.2 16 Q0.2 14.2 2 13.6 Q3.6 13.4 7 16.5 Z" fill="#fff" stroke="#3a3a3a" stroke-width="1.5" stroke-linejoin="round"/><path d="M10.5 10 V14 M13.5 10.5 V14 M16.5 11.5 V14" stroke="#3a3a3a" stroke-width="1.1"/></svg>
</div>

<!-- taskbar -->
<div class="L" id="tb">
 <div style="left:0;top:422px;width:619px;height:14px;background:#dbe6f2"></div>
 <div style="left:0;top:422px;width:7.5px;height:14px;background:#c4e3f1"></div>
 <div style="left:7.5px;top:422px;width:191px;height:14px;background:#fff;border-top:.6px solid #c8d2dc"></div>
<div style="left:310.1px;top:422px;width:25.4px;height:14px;background:#eef3f9"></div>
<svg style="left:14.0px;top:427.5px" width="10.0" height="9.0" viewBox="0 0 10.0 9.0"><circle cx="5.6" cy="4" r="2.7" fill="none" stroke="#3a3a3a" stroke-width=".9"/><path d="M3.7 6 L0.9 8.8" stroke="#3a3a3a" stroke-width=".9"/></svg>
<svg style="left:207.5px;top:427.5px" width="12.0" height="9.0" viewBox="0 0 12.0 9.0"><rect x="1.4" y="2.6" width="7" height="5" fill="none" stroke="#2e2e2e" stroke-width="1"/><rect x="1" y="0.6" width="1" height="1.4" fill="#2e2e2e"/><rect x="8" y="0.6" width="1" height="1.4" fill="#2e2e2e"/><rect x="9.8" y="1.6" width="1" height="1.4" fill="#2e2e2e"/><rect x="9.8" y="4" width="1" height="4.6" fill="#2e2e2e"/></svg>
<svg style="left:234.5px;top:425.0px" width="14.0" height="11.0" viewBox="0 0 14.0 11.0"><path d="M0.6 9 C0.6 3.6 3.8 0.8 7.2 0.8 C10.8 0.8 13.4 3.6 13.4 6.6 C13.4 8.6 11.8 9.8 10 9.8 C8.4 9.8 7.8 8.8 8.2 7.8 C8.8 6.2 7 4.6 5 5 C2.6 5.6 1.6 8 2.4 11 H1 Z" fill="#2bc3d2"/><path d="M0.6 9 C0.6 5 2.6 2.6 5.4 1.4 C3.4 3.6 3.4 5.6 5 5 C2.8 5.8 2 8 3 11 H1Z" fill="#1b72d8"/><path d="M7.2 0.8 C10.8 0.8 13.4 3.6 13.4 6.6 C13.4 8.6 11.8 9.8 10 9.8 C11 8.4 11 4 7.2 0.8Z" fill="#4cd48a" opacity=".9"/><path d="M2 8 C3 11 6 11.2 8 11 V9.6 C6 10 4.4 9.4 4.4 7.4 C4.4 6 5 5.2 5 5 C3 5.4 1.8 6.6 2 8Z" fill="#0f55b8"/></svg>
<svg style="left:262.0px;top:427.2px" width="14.0" height="9.0" viewBox="0 0 14.0 9.0"><path d="M0.6 0.8 H5 L6 2 H12.8 V9 H0.6Z" fill="#f5b92e"/><rect x="0.6" y="3" width="12.2" height="6" fill="#fad25a"/><rect x="3.4" y="5.4" width="6.6" height="3.6" fill="#3b8fe0"/><rect x="4.6" y="6.6" width="4.2" height="2.4" fill="#fad25a"/></svg>
<svg style="left:288.6px;top:426.6px" width="16.0" height="10.0" viewBox="0 0 16.0 10.0"><polygon points="0.6,3.4 7.6,0.4 14.8,3.4 14.8,10 0.6,10" fill="#2e2e2e"/><polygon points="2.2,4.4 13.2,4.4 7.7,8.6" fill="#f4f7fa"/><polygon points="0.6,4 7.7,9.4 14.8,4 14.8,10 0.6,10" fill="#3c3c3c"/></svg>
<svg style="left:317.0px;top:428.4px" width="12.0" height="8.0" viewBox="0 0 12.0 8.0"><rect x="4.6" y="0.6" width="3.2" height="4.8" fill="#2f5a38"/><rect x="5.4" y="1.2" width="1.4" height="1.4" fill="#46d246"/><rect x="1" y="4.8" width="10" height="3.2" fill="#b9b9b9"/><rect x="2.2" y="5.8" width="2.6" height="1.8" fill="#fff"/><rect x="7.2" y="5.8" width="2.6" height="1.8" fill="#fff"/></svg>
<svg style="left:551.4px;top:427.4px" width="16.0" height="9.0" viewBox="0 0 16.0 9.0"><rect x="1" y="1" width="11.4" height="8" fill="#f5f5f5" stroke="#2e2e2e" stroke-width="1.1"/><rect x="12.4" y="2.6" width="1.6" height="6.4" fill="#2e2e2e"/><rect x="2.6" y="4.4" width="3.4" height="3.6" fill="#2e2e2e"/><rect x="7" y="3" width="4" height=".9" fill="#2e2e2e"/><rect x="7" y="5" width="4" height=".9" fill="#2e2e2e"/><rect x="7" y="7" width="4" height=".9" fill="#2e2e2e"/><rect x="2.6" y="2.6" width="3.4" height=".9" fill="#2e2e2e"/></svg>
<svg style="left:579.6px;top:430.4px" width="8.4" height="5.0" viewBox="0 0 8.4 5.0"><path d="M1 4.2 L4.1 1.1 L7.2 4.2" fill="none" stroke="#2e2e2e" stroke-width=".95"/></svg>
<svg style="left:593.4px;top:427.6px" width="8.4" height="9.0" viewBox="0 0 8.4 9.0"><path d="M2.6 2.6 Q2.6 0.8 4.4 0.8 Q6 0.8 6 2.4" fill="none" stroke="#2e2e2e" stroke-width=".8"/><rect x="1" y="3.4" width="5.4" height="5" fill="none" stroke="#2e2e2e" stroke-width=".9"/><rect x="6" y="4.4" width="1.6" height="2.6" fill="#2e2e2e"/></svg>
<svg style="left:605.6px;top:427.6px" width="12.0" height="9.0" viewBox="0 0 12.0 9.0"><circle cx="5.8" cy="5.8" r="4.8" fill="none" stroke="#2e2e2e" stroke-width=".9"/><ellipse cx="5.8" cy="5.8" rx="2" ry="4.8" fill="none" stroke="#2e2e2e" stroke-width=".8"/><path d="M1 5.8 H10.6 M1.8 3.2 H9.8" stroke="#2e2e2e" stroke-width=".8"/></svg>
<div class="t" id="t62" style="left:29.3px;top:427.4px;font-size:9px;line-height:12.6px;color:#3f3f3f;transform:scaleX(0.8938);">Type here to search</div>
</div>
</body></html>
